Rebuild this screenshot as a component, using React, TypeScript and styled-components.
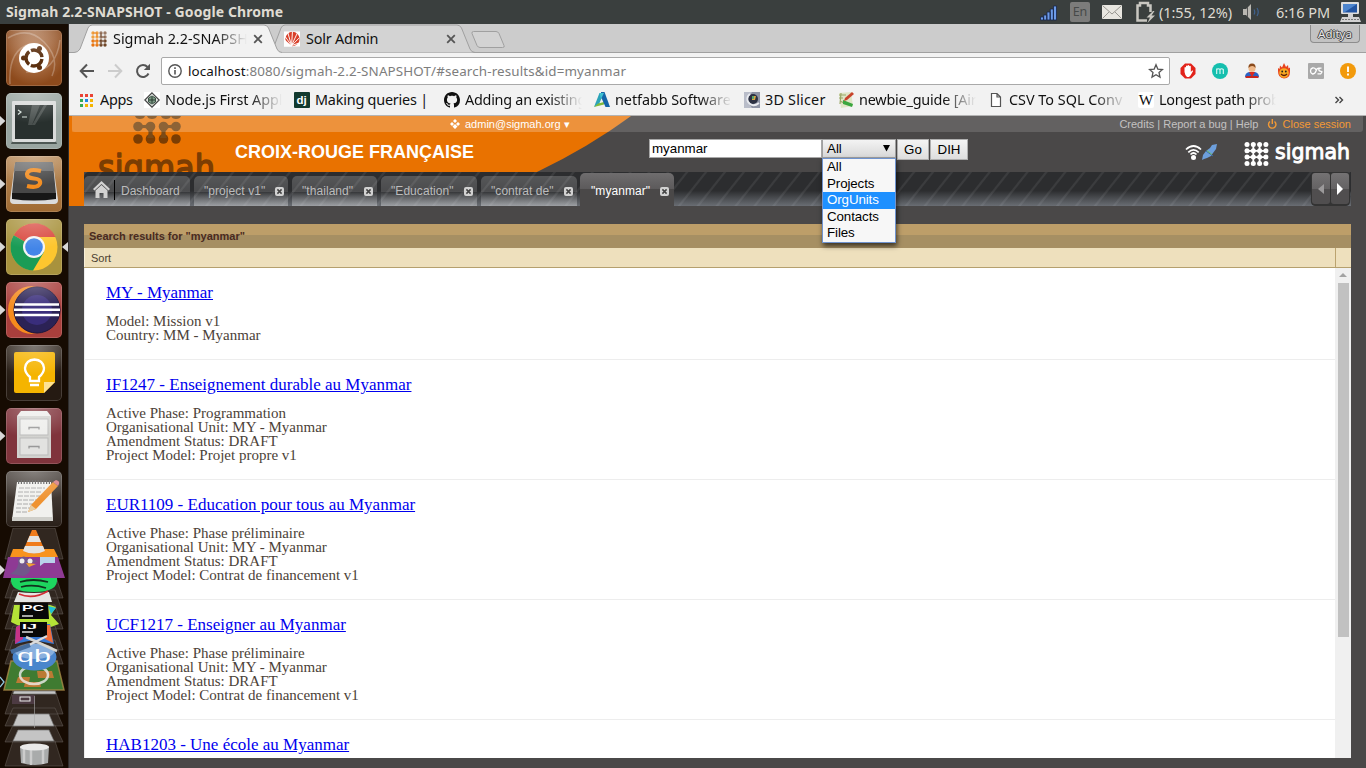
import React from 'react';
import styled, { createGlobalStyle, css } from 'styled-components';

const Global = createGlobalStyle`
  * { box-sizing: border-box; }
  body { margin: 0; overflow: hidden; background: #4a4848; }
  svg { display: block; flex: none; }
`;

const ui = '"Noto Sans", sans-serif';
const sans = '"Liberation Sans", Arial, sans-serif';
const serif = '"Liberation Serif", "Times New Roman", serif';

const Screen = styled.div`
  width: 1366px;
  height: 768px;
  display: flex;
  flex-direction: column;
  overflow: hidden;
  font-family: ${ui};
`;

/* ---------- desktop panel ---------- */

const Panel = styled.header`
  height: 24px;
  flex: none;
  display: flex;
  align-items: center;
  padding: 0 4px 0 6px;
  background: #3a3f3e;
  color: #dfdbd2;
`;

const PanelText = styled.span<{ $bold?: boolean; $width?: number; $gap?: number }>`
  font-size: ${(p) => (p.$bold ? 14 : 14.5)}px;
  letter-spacing: ${(p) => (p.$bold ? 0.1 : -0.06)}px;
  font-weight: ${(p) => (p.$bold ? 700 : 400)};
  ${(p) => p.$width && `width: ${p.$width}px;`}
  margin-left: ${(p) => p.$gap ?? 0}px;
  padding-bottom: 1px;
  white-space: pre;
  flex: none;
`;

const Tray = styled.div`
  margin-left: auto;
  display: flex;
  align-items: center;
`;

const LangBadge = styled.span`
  width: 20px;
  height: 20px;
  margin: 0 12px 0 13px;
  border-radius: 2px;
  background: #7c7c7b;
  color: #474a49;
  font-size: 12.5px;
  line-height: 19px;
  text-align: center;
`;

const Workspace = styled.div`
  flex: 1;
  display: flex;
  min-height: 0;
`;

/* ---------- launcher ---------- */

const Launcher = styled.nav`
  width: 69px;
  flex: none;
  display: flex;
  flex-direction: column;
  gap: 7px;
  padding-top: 6px;
  background: #160b02;
  border-right: 1px solid #2f2d2d;
`;

const Slot = styled.div`
  display: flex;
  align-items: center;
  height: 56px;
  flex: none;
`;

const Marker = styled.i<{ $on?: boolean; $right?: boolean }>`
  width: 6px;
  height: 10px;
  flex: none;
  background: ${(p) => (p.$on ? '#d8d8d8' : 'transparent')};
  clip-path: ${(p) => (p.$right ? 'polygon(100% 0, 0 50%, 100% 100%)' : 'polygon(0 0, 90% 50%, 0 100%)')};
`;

const Tile = styled.div<{ $bg: string }>`
  position: relative;
  width: 56px;
  height: 56px;
  flex: none;
  border-radius: 5px;
  overflow: hidden;
  background: ${(p) => p.$bg};

  &::after {
    content: '';
    position: absolute;
    inset: 0;
    border-radius: 5px;
    background: radial-gradient(ellipse 50px 30px at 50% 0, rgba(255, 255, 255, 0.3), transparent);
    box-shadow: inset 0 0 0 1px rgba(255, 255, 255, 0.16);
  }
`;

const Pile = styled.div`
  margin-top: -6px;
  flex: none;
`;

/* ---------- browser ---------- */

const Browser = styled.main`
  flex: 1;
  min-width: 0;
  display: flex;
  flex-direction: column;
`;

const TabStrip = styled.div`
  height: 29px;
  flex: none;
  display: flex;
  align-items: flex-start;
  padding-left: 5px;
  position: relative;
  background: #ccc;
  box-shadow: inset 0 -1px #a0a0a0;
`;

const BrowserTab = styled.div<{ $front?: boolean; $width: number }>`
  position: relative;
  z-index: ${(p) => (p.$front ? 2 : 1)};
  width: ${(p) => p.$width}px;
  height: 29px;
  margin-right: -15px;
  padding: 1px 20px 0 17px;
  display: flex;
  align-items: center;
  gap: 6px;
  flex: none;
`;

const TabShape = styled.svg`
  position: absolute;
  inset: 0;
  z-index: -1;
`;

const Faded = styled.span<{ $width: number; $fade?: boolean; $ls?: number }>`
  width: ${(p) => p.$width}px;
  flex: none;
  overflow: hidden;
  white-space: pre;
  color: #111;
  font-size: 14.4px;
  letter-spacing: ${(p) => p.$ls ?? 0}px;
  line-height: 20px;
  ${(p) => p.$fade && css`mask-image: linear-gradient(to right, #000 calc(100% - 32px), transparent);`}
`;

const UserButton = styled.div`
  width: 50px;
  height: 18px;
  margin: 1px 6px 0 auto;
  border: 1px solid #8d8d8d;
  border-top: 0;
  border-radius: 0 0 4px 4px;
  background: #c2c2c2;
  color: #e8e8e8;
  font-size: 11.5px;
  line-height: 18px;
  text-align: center;
  text-shadow: 1px 0 #444, -1px 0 #444, 0 1px #444, 0 -1px #444;
`;

const Toolbar = styled.div`
  height: 33px;
  flex: none;
  display: flex;
  align-items: center;
  padding: 3px 10px 0 10px;
  background: #f2f2f2;
`;

const NavIcons = styled.div`
  display: flex;
  gap: 10px;
  width: 82px;
`;

const Omnibox = styled.div`
  width: 1009px;
  height: 28px;
  border: 1px solid #a9a9a9;
  border-radius: 2px;
  background: #fff;
  display: flex;
  align-items: center;
  padding: 0 5px 0 6px;
  gap: 6px;
`;

const Url = styled.span`
  flex: 1;
  font-size: 13.4px;
  letter-spacing: 0.13px;
  color: #7d7d7d;
  b { font-weight: 400; color: #111; }
`;

const Extensions = styled.div`
  display: flex;
  gap: 16px;
  margin-left: 10px;
`;

const Bookmarks = styled.div`
  height: 30px;
  flex: none;
  display: flex;
  align-items: center;
  padding: 0 0 2px 10px;
  background: #f2f2f2;
  box-shadow: inset 0 -1px #b4b4b4;
`;

const Bookmark = styled.div<{ $width: number }>`
  width: ${(p) => p.$width}px;
  flex: none;
  display: flex;
  align-items: center;
  gap: 5px;
`;

/* ---------- web application ---------- */

const WebApp = styled.section`
  flex: 1;
  min-height: 0;
  position: relative;
  display: flex;
  flex-direction: column;
  background: #4a4848;
  font-family: ${sans};
  isolation: isolate;
`;

const Banner = styled.svg`
  position: absolute;
  top: 0;
  left: 0;
  z-index: -1;
`;

const UserBand = styled.div`
  height: 16px;
  flex: none;
  display: flex;
  align-items: center;
  margin: 0 3px;
  padding: 0 12px 0 378px;
  border-radius: 0 0 3px 3px;
  background: rgba(255, 255, 255, 0.14);
  font-size: 11px;
  color: #fff;
`;

const UserMail = styled.span`
  margin-left: 5px;
  white-space: pre;
`;

const BandLinks = styled.div`
  margin-left: auto;
  display: flex;
  align-items: center;
  color: #c3c2c2;
  white-space: pre;
  em { font-style: normal; color: #f39a35; margin-left: 5px; }
`;

const BrandRow = styled.div`
  height: 40px;
  flex: none;
  display: flex;
  align-items: flex-start;
  padding: 7px 15px 0 166px;
`;

const OrgName = styled.h1`
  margin: 3px 0 0;
  width: 414px;
  font-size: 18px;
  line-height: 20px;
  color: #fff;
`;

const SearchForm = styled.div`
  display: flex;
  font-size: 13.33px;
  color: #000;
  position: relative;
`;

const Field = styled.div`
  width: 173px;
  height: 19px;
  padding: 0 2px;
  border: 1px solid #a8a8a8;
  background: #fff;
  line-height: 17px;
`;

const Select = styled.div`
  width: 74px;
  height: 19px;
  padding: 0 5px 0 4px;
  border: 1px solid #a0a0a0;
  background: linear-gradient(#f3f3f3, #d9d9d9);
  display: flex;
  align-items: center;
  justify-content: space-between;
`;

const Options = styled.ul`
  position: absolute;
  z-index: 5;
  top: 19px;
  left: 173px;
  width: 74px;
  height: 85px;
  margin: 0;
  padding: 0;
  list-style: none;
  border: 1px solid #6f93cf;
  background: #f7f7f7;
  box-shadow: 1px 3px 5px rgba(0, 0, 0, 0.65);
`;

const Option = styled.li<{ $on?: boolean }>`
  height: 16.6px;
  line-height: 15px;
  padding-left: 4px;
  letter-spacing: -0.1px;
  color: ${(p) => (p.$on ? '#fff' : '#000')};
  background: ${(p) => (p.$on ? '#1e90ff' : 'transparent')};
`;

const PushButton = styled.div<{ $width: number }>`
  width: ${(p) => p.$width}px;
  height: 21px;
  margin: 0 0 0 1px;
  border: 1px solid #b0b0b0;
  background: linear-gradient(#f4f4f4, #dedede);
  line-height: 20px;
  text-align: center;
`;

const BrandLogo = styled.div`
  margin-left: auto;
  display: flex;
  gap: 24px;
`;

const TabBar = styled.div`
  height: 34px;
  flex: none;
  margin: 0 15px;
  display: flex;
  align-items: flex-end;
  gap: 4px;
  border-radius: 5px 0 0 0;
  overflow: hidden;
  background:
    linear-gradient(rgba(255, 255, 255, 0) 55%, rgba(190, 198, 210, 0.42)),
    repeating-linear-gradient(128.5deg, #2c2d2f 0 11.6px, #3b3c3e 12.6px 13.8px, #2c2d2f 14.8px);
`;

const AppTab = styled.div<{ $width: number; $active?: boolean }>`
  width: ${(p) => p.$width}px;
  height: ${(p) => (p.$active ? 33 : 30)}px;
  margin-left: ${(p) => (p.$active ? -1 : 0)}px;
  padding: ${(p) => (p.$active ? '3px 4px 0 11px' : '0 3px 0 10px')};
  flex: none;
  display: flex;
  align-items: center;
  justify-content: space-between;
  border-radius: 5px 5px 0 0;
  font-size: 12px;
  letter-spacing: 0.06px;
  color: ${(p) => (p.$active ? '#fff' : '#bcbcbd')};
  background: ${(p) =>
    p.$active
      ? 'linear-gradient(#6f6d6e, #5c5a5b 16px, #4a4848 16px)'
      : 'linear-gradient(rgba(255,255,255,.2), rgba(255,255,255,.14) 16px, rgba(255,255,255,.02) 16px, rgba(255,255,255,.34))'};
`;

const HomeTab = styled(AppTab)`
  padding: 0 0 3px 9px;
  justify-content: flex-start;
  letter-spacing: 0;
  span { padding-top: 3px; }
`;

const HomeRule = styled.i`
  width: 1px;
  height: 20px;
  margin: 0 6px 0 4px;
  background: #000;
`;

const Pager = styled.div`
  margin-left: auto;
  margin-right: 1px;
  display: flex;
  gap: 1px;
  height: 34px;
  padding-bottom: 1px;
  background: #333;
  border: 1px solid #333;
  border-radius: 4px;
`;

const PagerButton = styled.div`
  width: 18px;
  display: flex;
  align-items: center;
  justify-content: center;
  border-radius: 3px;
  background: linear-gradient(#747273, #646263 16px, #504e4f 16px);
`;

const Results = styled.section`
  flex: 1;
  min-height: 0;
  margin: 18px 15px 10px;
  display: flex;
  flex-direction: column;
`;

const ResultsTitle = styled.h2`
  height: 24px;
  flex: none;
  margin: 0;
  padding-left: 5px;
  font-size: 11px;
  line-height: 24px;
  color: #4a2a20;
  background: linear-gradient(#bd9e69 11px, #a68f63 11px);
`;

const SortRow = styled.div`
  height: 20px;
  flex: none;
  display: flex;
  border-bottom: 1px solid #b5a06e;
  background: #eee0bd;
  font-size: 11px;
  line-height: 20px;
  color: #4b3f30;
  span { width: 1252px; padding-left: 7px; border-right: 1px solid #bba36f; box-shadow: inset 1px 0 #f8efd8; }
`;

const ListArea = styled.div`
  flex: 1;
  min-height: 0;
  display: flex;
  background: #fff;
`;

const List = styled.div`
  width: 1251px;
  overflow: hidden;
  font-family: ${serif};
  border-left: 1px solid #ededed;
`;

const Item = styled.article`
  padding: 15px 0 17px 21px;
  border-bottom: 1px solid #ededed;
`;

const ItemLink = styled.a`
  display: block;
  height: 20px;
  margin-bottom: 11px;
  font-size: 17px;
  line-height: 20px;
  color: #0000ee;
  text-decoration: underline;
  white-space: pre;
`;

const Detail = styled.div`
  font-size: 15px;
  line-height: 14px;
  color: #4c4238;
`;

const Scrollbar = styled.div`
  width: 16px;
  background: #f0f0f0;
  display: flex;
  flex-direction: column;
  align-items: center;
  padding-top: 5px;
`;

const Thumb = styled.div`
  width: 11px;
  height: 354px;
  margin: 5px 0 0 1px;
  background: #c1c1c1;
`;

/* ---------- drawings ---------- */

const Close = () => (
  <svg width="10" height="10" viewBox="0 0 10 10">
    <path d="M1.200 1.200l7.600 7.600M8.800 1.200L1.200 8.800" stroke="#555" strokeWidth="1.8" />
  </svg>
);

const TabClose = () => (
  <svg width="11" height="11" viewBox="0 0 11 11">
    <rect x="1" y="1" width="9" height="9" rx="2" fill="#d2d2d2" />
    <path d="M3.4 3.4l4.2 4.2M7.6 3.4L3.4 7.6" stroke="#444" strokeWidth="1.5" />
  </svg>
);

const dotGrid = [0, 1, 2, 3];

const SigmahMini = () => (
  <svg width="16" height="16" viewBox="0 0 16 16">
    {dotGrid.map((r) =>
      dotGrid.map((c) => (
        <circle key={`${r}${c}`} cx={2 + c * 4} cy={2 + r * 4} r="1.7"
          fill={r < 2 ? (c < 2 ? '#f0a040' : '#9b7a66') : c < 2 ? '#e87410' : '#6e4526'} />
      ))
    )}
    <path d="M2 2h4M6 2v4M2 10h4M6 10v4" stroke="#ea8a2a" strokeWidth="1.2" />
    <path d="M10 2v4M10 6h4M10 10v4M10 10h4" stroke="#82604a" strokeWidth="1.2" />
  </svg>
);

const Solr = () => (
  <svg width="16" height="16" viewBox="0 0 17 16">
    <rect width="17" height="16" fill="#fff" />
    <circle cx="9" cy="8" r="7.6" fill="#d9402a" />
    <path d="M8 15L1 5M8 15L4 1M8 15L9 0M8 15l6-13M8 15l8-8M8 15l9-3" stroke="#fff" strokeWidth="1" />
    <path d="M0 8l9 8H0z" fill="#fff" />
  </svg>
);

const Apps = () => {
  const colors = ['#ea4335', '#ea4335', '#ea4335', '#34a853', '#1e88e5', '#f4b400', '#34a853', '#f4b400', '#f4b400'];
  return (
    <svg width="16" height="15" viewBox="0 0 16 15">
      {colors.map((c, i) => (
        <rect key={i} x={1 + (i % 3) * 5} y={1 + Math.floor(i / 3) * 5} width="3" height="3" fill={c} />
      ))}
    </svg>
  );
};

const NodeIcon = () => (
  <svg width="16" height="16" viewBox="0 0 16 16">
    <rect width="16" height="16" fill="#fff" />
    <path d="M8 .8L15.2 8 8 15.2.8 8z" fill="#e4e8e4" stroke="#444" strokeWidth="1.2" />
    <path d="M8 4l3.5 2v4L8 12l-3.500-2V6z" fill="#7d9c86" stroke="#3d5246" />
    <path d="M5 8h6M8 5v6" stroke="#2b3a31" />
  </svg>
);

const DjangoIcon = () => (
  <svg width="16" height="16" viewBox="0 0 16 16">
    <rect width="16" height="16" rx="1" fill="#123a2e" />
    <text x="2.6" y="11.500" fontFamily="Liberation Sans" fontWeight="700" fontSize="11.500" fill="#fff">dj</text>
  </svg>
);

const GitHub = () => (
  <svg width="16" height="16" viewBox="0 0 16 16">
    <path fill="#111" d="M8 0C3.580 0 0 3.580 0 8c0 3.540 2.290 6.530 5.470 7.590.4.07.550-.170.550-.380 0-.190-.010-.820-.010-1.490-2.010.370-2.530-.490-2.690-.940-.090-.230-.480-.940-.820-1.130-.280-.150-.680-.520-.010-.530.630-.010 1.080.580 1.230.820.720 1.210 1.870.870 2.330.660.070-.520.280-.870.510-1.070-1.780-.2-3.640-.890-3.640-3.950 0-.870.310-1.590.820-2.150-.080-.2-.360-1.020.080-2.120 0 0 .670-.210 2.200.820.640-.180 1.320-.270 2-.270s1.360.090 2 .270c1.530-1.040 2.200-.820 2.200-.820.440 1.100.160 1.920.080 2.120.510.560.820 1.270.820 2.150 0 3.070-1.870 3.750-3.650 3.950.290.250.540.730.540 1.480 0 1.070-.010 1.930-.010 2.200 0 .210.150.460.550.380A8.010 8.010 0 0016 8c0-4.420-3.580-8-8-8z" />
  </svg>
);

const Autodesk = () => (
  <svg width="16" height="16" viewBox="0 0 16 16">
    <path d="M0 15L5.500 1H10L5 12z" fill="#2ba3b8" />
    <path d="M0 15l4-3.500 6-1.500v2.500z" fill="#7fba3c" />
    <path d="M7 0h3.500L16 15h-4.500L7 5z" fill="#1565a8" />
    <path d="M5.500 1H10l-3 6z" fill="#3fc0d0" />
  </svg>
);

const Slicer = () => (
  <svg width="16" height="16" viewBox="0 0 16 16">
    <rect width="16" height="16" fill="#8d93a4" />
    <path d="M0 0h8L3 9l5 7H0z" fill="#b9bdc9" />
    <circle cx="9" cy="7" r="5" fill="#2c3142" />
    <path d="M6 2a6 6 0 000 10q4 3 9-1" stroke="#e9ebf0" strokeWidth="1.800" fill="none" />
    <path d="M8 4h4l-1 4H8z" fill="#d9a441" />
    <path d="M8 4h2v3H8z" fill="#5ba36c" />
  </svg>
);

const Newbie = () => (
  <svg width="16" height="16" viewBox="0 0 16 16">
    <path d="M1 1l12-1 2 14-12 2z" fill="#dfe5c6" />
    <path d="M1 3h7M1 6h4M2 9l4 2M3 1l-1 11" stroke="#9aa766" strokeWidth="1.200" />
    <path d="M5 8l10 4-1 3-9-3z" fill="#3aa63f" />
    <path d="M14 0l2 2-7 6-3 1 1-3z" fill="#c8432b" />
  </svg>
);

const PageIcon = () => (
  <svg width="16" height="16" viewBox="0 0 16 16">
    <path d="M3.500 1.500h5.500l3.500 3.500v9.500h-9zM9 1.500V5h3.500" fill="#fff" stroke="#555" strokeWidth="1.200" />
  </svg>
);

const Wiki = () => (
  <svg width="16" height="16" viewBox="0 0 16 16">
    <rect width="16" height="16" rx="2" fill="#fff" />
    <text x="0.800" y="12.800" fontFamily="Liberation Serif" fontSize="14" textLength="14.500" lengthAdjust="spacingAndGlyphs" fill="#111">W</text>
  </svg>
);

const ExtBlock = () => (
  <svg width="16" height="16" viewBox="0 0 16 16">
    <path d="M5 .5h6L15.500 5v6L11 15.500H5L.5 11V5z" fill="#e2231a" />
    <path d="M4.500 9V4.500q.8-1 1.500 0V3q.8-1 1.600 0V2.500q.8-1 1.600 0V3.300q.9-1 1.600 0V9l1.300-1.500q1.200-.3.900.8L10.500 12.500 9 14H7Q5 12.500 4.500 9z" fill="#fff" />
  </svg>
);

const ExtMonkey = () => (
  <svg width="16" height="16" viewBox="0 0 16 16">
    <circle cx="8" cy="8" r="8" fill="#15bfae" />
    <path d="M4.700 11V5.500M4.700 6.500q1.600-1.500 3.300 0V11M8 6.500q1.600-1.500 3.300 0V11" stroke="#dffaf6" strokeWidth="1.100" fill="none" />
  </svg>
);

const ExtHero = () => (
  <svg width="16" height="16" viewBox="0 0 16 16">
    <path d="M1 14q0-4 4-5h6q4 1 4 5z" fill="#2b62c4" />
    <path d="M5 9l3 5 3-5z" fill="#d92b20" />
    <path d="M1 14l2-1h10l2 1-1 1H2z" fill="#c9251c" />
    <circle cx="8" cy="5.500" r="3.500" fill="#efb98a" />
    <path d="M4.500 5Q4 .5 8 .5T11.500 5Q10 2.800 8 3T4.500 5z" fill="#8a4a1c" />
  </svg>
);

const ExtFlame = () => (
  <svg width="16" height="16" viewBox="0 0 16 16">
    <path d="M2 8V5l1.500 1L4 2.500l2 2L8 0l2 4 2-2 .5 3.500L14 4.500V9q0 6-6 6.500Q2 15 2 8z" fill="#e8431c" />
    <circle cx="8" cy="10" r="4.800" fill="#f7a823" />
    <circle cx="6.200" cy="8.500" r=".9" fill="#222" />
    <circle cx="9.800" cy="8.500" r=".9" fill="#222" />
    <path d="M5 11q3 3 6 0" stroke="#5b1c0a" fill="none" strokeWidth="1.200" />
  </svg>
);

const ExtLast = () => (
  <svg width="16" height="16" viewBox="0 0 16 16">
    <rect width="16" height="16" rx="1" fill="#a9a9a9" />
    <path d="M8 6.500Q6.500 4.500 4.500 5T2.500 8t2 3Q7 11 8 8T11 5.200h2.500M13.500 5.200Q10.800 4.800 10.800 6.500T13 8.300 12.500 10.900H9.500" stroke="#fff" strokeWidth="1.300" fill="none" />
  </svg>
);

const ExtWarn = () => (
  <svg width="16" height="16" viewBox="0 0 16 16">
    <circle cx="8" cy="8" r="8" fill="#f29a0c" />
    <path d="M8 3.500v5.500M8 10.600v2" stroke="#fff" strokeWidth="1.900" />
  </svg>
);

const HeaderBanner = () => (
  <Banner width="1297" height="100" viewBox="0 0 1297 100">
    <defs>
      <clipPath id="brand"><rect width="400" height="56" /></clipPath>
    </defs>
    <path d="M0 0H562Q520 31 468 56V56H15V90H0z" fill="#e97200" />
    <path d="M3 0H562Q551 8.500 539 16H3z" fill="#fff" fillOpacity=".11" />
    <g fill="#7b4a16">
      <path d="M66 0h10q-1 3-5 3t-5-3M78 0h10q-1 3-5 3t-5-3M92 0h10q-1 3-5 3t-5-3M102 0h10q-1 3-5 3t-5-3" />
      {[69, 81.500, 94.500, 107].map((x) => (
        <g key={x}>
          <circle cx={x} cy="10.500" r="4.800" />
          <circle cx={x} cy="23" r="4.800" fill="#7b3d03" />
        </g>
      ))}
      <path d="M69 7.500q6 3 12 0v6q-6-3-12 0zM94.500 7.500q6 3 12 0v6q-6-3-12 0zM78 12q3 5 0 10h7q-3-5 0-10zM91 12q3 5 0 10h7q-3-5 0-10z" />
    </g>
    <g clipPath="url(#brand)">
      <text x="29" y="63.500" fontFamily="DejaVu Sans" fontSize="35" textLength="117" lengthAdjust="spacingAndGlyphs" fill="#7b3d03" stroke="#7b3d03" strokeWidth="1.600" strokeLinejoin="round">sigmah</text>
    </g>
  </Banner>
);

const LogoMark = () => (
  <svg width="108" height="34" viewBox="0 0 108 34">
    <g fill="#fff">
      {dotGrid.map((r) => dotGrid.map((c) => <circle key={`${r}${c}`} cx={4 + c * 6.300} cy={5.500 + r * 6.300} r="2.500" />))}
    </g>
    <path d="M4 11.800h19M4 18.100h19M10.300 5.500v19M16.600 5.500v19" stroke="#fff" strokeWidth="1.800" fill="none" />
    <text x="32" y="20.300" fontFamily="DejaVu Sans" fontSize="22" textLength="75" lengthAdjust="spacingAndGlyphs" fill="#fff" stroke="#fff" strokeWidth="1" strokeLinejoin="round">sigmah</text>
  </svg>
);

const Wifi = () => (
  <svg width="34" height="24" viewBox="0 -4 34 24">
    <g stroke="#fff" fill="none" strokeWidth="1.700">
      <path d="M1 6.500q7.500-7 15 0M3.300 9.300q5.200-5 10.400 0M5.500 11.500q3-3 6 0" />
    </g>
    <circle cx="8.500" cy="14.500" r="2.500" fill="#fff" />
    <path d="M17 17l1-5 3-4 4-3 2-3 5-1-1 5-3 4-2 3-4 2-3 1z" fill="#6d9fdc" />
    <path d="M21 8l7 5" stroke="#3c6fae" strokeWidth="1" />
    <path d="M22 7.500l5 4" stroke="#6fc067" strokeWidth="1" />
  </svg>
);

const launcherItems: { bg: string; on?: boolean; focus?: boolean; art: React.ReactNode }[] = [
  {
    bg: 'radial-gradient(circle at 50% 40%, #c08a64, #8d4a1c 75%)',
    art: (
      <>
        <path d="M2 8q20-12 36 4t8 34M54 10q-4 34-34 32M4 54Q2 20 24 14" stroke="#fff" strokeOpacity=".25" strokeWidth="1.500" fill="none" />
        <circle cx="28" cy="28" r="15" fill="#fff" />
        <circle cx="28" cy="28" r="8" fill="none" stroke="#5c3010" strokeWidth="3.400" strokeDasharray="14.700 2" strokeDashoffset="-1" />
        <circle cx="17.500" cy="28" r="2.500" fill="#5c3010" />
        <circle cx="33.500" cy="18.500" r="2.500" fill="#5c3010" />
        <circle cx="33.500" cy="37.500" r="2.500" fill="#5c3010" />
      </>
    ),
  },
  {
    bg: '#99a5a0', on: true,
    art: (
      <>
        <path d="M5 51h46l-2-5H7z" fill="#4d5753" />
        <rect x="6" y="8" width="44" height="41" rx="1" fill="#d9dbda" />
        <rect x="9" y="12" width="38" height="34" fill="#28302e" />
        <path d="M26 12h8l-8 20h-4zM38 12h3L29 32h-3z" fill="#fff" fillOpacity=".16" />
        <path d="M12 17l3 2-3 2.500M16 24h5" stroke="#d8e4de" strokeWidth="1.200" fill="none" />
      </>
    ),
  },
  {
    bg: 'linear-gradient(#b98b5a, #a06b33)', on: true,
    art: (
      <>
        <path d="M9 7h38l5 37q0 4-4 4H8q-4 0-4-4z" fill="#dcdcdc" />
        <path d="M11 6h34q2 0 2 2l3 30q0 5-3 5H9q-3 0-3-5L9 8q0-2 2-2z" fill="#474747" />
        <path d="M11 6h34q2 0 2 2l1 7H8l1-7q0-2 2-2z" fill="#6d6d6d" />
        <path d="M6 37h44v6q-22 3-44 0z" fill="#171717" />
        <path d="M35 15q-13-3-14 3 0 4 7 4.500t6 5q-2 5-13 2.500" stroke="#f28c1f" strokeWidth="4.200" fill="none" />
      </>
    ),
  },
  {
    bg: '#a8923d', on: true, focus: true,
    art: (
      <>
        <circle cx="28" cy="28" r="23.500" fill="#fdc62f" />
        <path d="M28 28L7.700 16.200A23.500 23.500 0 0149.500 18H28z" fill="#d9483f" />
        <path d="M28 28L7.700 16.200A23.500 23.500 0 0027 51.500L38 33z" fill="#1a9c56" />
        <circle cx="28" cy="28" r="11" fill="#f4f4f4" />
        <circle cx="28" cy="28" r="8.800" fill="#4285e8" />
      </>
    ),
  },
  {
    bg: '#a93f3c', on: true,
    art: (
      <>
        <circle cx="26" cy="28" r="24" fill="#f58b1d" />
        <circle cx="32" cy="28" r="24" fill="#a93f3c" />
        <circle cx="31" cy="28" r="23" fill="#2b2255" stroke="#1c183d" />
        <circle cx="31" cy="28" r="15" fill="#45379a" fillOpacity=".55" />
        <path d="M9 22.500h44M8 27.700h46M9 33h44" stroke="#fff" strokeWidth="2.500" />
      </>
    ),
  },
  {
    bg: 'radial-gradient(circle at 50% 10%, #4b433c, #251a12 70%)',
    art: (
      <>
        <path d="M10 7h37q2 0 2 2v28L38 48H10q-2 0-2-2V9q0-2 2-2z" fill="#f5b400" />
        <path d="M49 37L38 48V37z" fill="#fde293" />
        <path d="M24 36v-4q-5-4-5-9 1-8 9.500-8.500Q37 15 38 23q0 5-5 9v4zM24 40h9" stroke="#fff" strokeWidth="2.300" fill="none" />
      </>
    ),
  },
  {
    bg: '#80343c', on: true,
    art: (
      <>
        <path d="M15 3h26l4 5v42H11V8z" fill="#ededeb" />
        <path d="M11 8h34v42H11z" fill="#d2d2cf" />
        <rect x="14" y="11" width="28" height="16" fill="#eeeeec" stroke="#bbb" />
        <rect x="14" y="30" width="28" height="17" fill="#e2e2e0" stroke="#bbb" />
        <path d="M23 21.500v-2h10v2M23 40.500v-2h10v2" stroke="#999" strokeWidth="1.300" fill="none" />
      </>
    ),
  },
  {
    bg: 'linear-gradient(#534c47, #2a2019)',
    art: (
      <>
        <path d="M11 11h34l2 38H6z" fill="#f1f1ee" />
        <path d="M12 11h33" stroke="#555" strokeWidth="4" strokeDasharray="1.200 1.600" />
        <path d="M13 17h26M12 21h24M12 25h22M11 29h20M11 33h16M10 37h14M10 41h12" stroke="#aaa" strokeDasharray="5 1" />
        <path d="M6 46h41v4H6z" fill="#cfcfca" />
        <path d="M22 41l3-7L47 11l5 4-22 23z" fill="#ef9331" />
        <path d="M25 34l5 4-8 3z" fill="#e8cfa5" />
        <path d="M47 11l3-2q4 1 3 4l-1 2z" fill="#d87f86" />
      </>
    ),
  },
];

const LauncherPile = () => (
  <svg width="68" height="240" viewBox="0 0 68 240">
    <g fill="#3b322b" fillOpacity=".75" stroke="#6a625b" strokeOpacity=".5">
      <path d="M13 0h42l8 31H5zM13 46h42l8 24H5zM13 62h42l8 24H5zM13 77h42l8 24H5zM13 98h42l8 24H5zM13 112h42l8 24H5zM13 162h42l8 24H5zM13 180h42l8 18H5zM13 197h42l8 17H5zM13 213h42l8 25H5z" />
    </g>
    <path d="M0 37l5 5-5 5z" fill="#ddd" />
    <path d="M0 149l4 5-4 5" fill="none" stroke="#8fc6dc" strokeWidth="1.300" />
    <path d="M13 21h41l4 8H10z" fill="#f7931e" />
    <path d="M8 29h50l7 21H3z" fill="#8e3a94" />
    <path d="M32 2h4l9 21q-11 6-22 0z" fill="#f07c1c" />
    <path d="M29.500 8h9l2.500 6H27zM25 18h18l2 5q-11 5-22 0z" fill="#e4e4e2" />
    <path d="M10 46q10-5 8-15 6-5 11 0l9 2-8 3q2 9-6 12z" fill="#73568b" />
    <circle cx="22" cy="33" r="2.500" fill="#eee" /><circle cx="30" cy="33" r="2.500" fill="#eee" />
    <path d="M26 35l10 1-7 3z" fill="#f0a030" />
    <path d="M40 29h15v6H44l-4 3z" fill="#b9d2ea" />
    <path d="M11 50h46q2 14-23 14T11 50z" fill="#1ed65f" />
    <path d="M20 54q13-4 28 0M21 59q12-3 25 1" stroke="#11331d" strokeWidth="1.800" fill="none" />
    <path d="M18 64q16 2 31 0l3 10H14z" fill="#e5e5e3" />
    <path d="M19 66q14 6 29-3" stroke="#d22e35" strokeWidth="1.600" fill="none" />
    <path d="M14 77h36l6 2-5 8 8 9-22 8-20-7-6-3z" fill="#b5e337" />
    <path d="M48 78l8 2-5 6z" fill="#20bfd6" />
    <path d="M20 75h28l1 16H19z" fill="#080808" />
    <text x="22" y="83" fontFamily="Liberation Sans" fontWeight="700" fontSize="9" textLength="22" lengthAdjust="spacingAndGlyphs" fill="#fff">PC</text>
    <path d="M22 88h11" stroke="#fff" strokeWidth="1.300" />
    <path d="M16 99l6-3h28l4 20-21-4-18 4z" fill="#3677d1" />
    <path d="M16 99l6-3 1 15-8 5z" fill="#c83386" /><path d="M44 97l6 0 3 18-8-4z" fill="#ef6c3a" />
    <path d="M20 94h27v15H20z" fill="#080808" />
    <text x="22" y="101" fontFamily="Liberation Sans" fontWeight="700" fontSize="8" textLength="15" lengthAdjust="spacingAndGlyphs" fill="#fff">IJ</text>
    <path d="M22 104h11" stroke="#fff" strokeWidth="1.300" />
    <path d="M11 133h46l7 29H4z" fill="#3f7b31" stroke="#a98a46" strokeOpacity=".8" strokeWidth="1.500" />
    <path d="M37 143h15l2 7H38zM18 149h12l-1 6H16zM25 154h15l1 5H24z" fill="#bb7a34" />
    <ellipse cx="34" cy="147" rx="14" ry="9" fill="none" stroke="#eee" strokeOpacity=".8" strokeWidth="2.500" />
    <ellipse cx="34.500" cy="129" rx="22" ry="13.500" fill="#4a86cc" />
    <ellipse cx="34.500" cy="123" rx="20" ry="8" fill="#fff" fillOpacity=".35" />
    <text x="17" y="134" fontFamily="Liberation Sans" fontSize="19" textLength="34" lengthAdjust="spacingAndGlyphs" fill="#fff">qb</text>
    <path d="M26 109l31 14" stroke="#d5d5d0" strokeWidth="2.500" />
    <path d="M47 108L29 117" stroke="#ddd" strokeWidth="2" /><path d="M30 117l-19 7" stroke="#456d9d" strokeWidth="4.500" />
    <g fill="#c4c4c4" stroke="#777" strokeWidth=".7">
      <path d="M14 163h41l1 3H13zM18 186h31l5 12H13zM18 202h31l5 11H13z" />
    </g>
    <rect x="12" y="167" width="23" height="9" fill="#4c3a42" />
    <rect x="20" y="169" width="10" height="4" fill="none" stroke="#eee" />
    <path d="M34.500 168v32" stroke="#aaa" strokeOpacity=".6" />
    <path d="M20 219h29l-1 16q-13 4-27 0z" fill="#a9abab" />
    <path d="M24 220v15M31 220v17M43 220v16" stroke="#ccc" strokeWidth="2.500" />
    <ellipse cx="34.500" cy="219" rx="14.500" ry="3.500" fill="#e9e9e9" />
  </svg>
);

/* ---------- data ---------- */

const bookmarks: { icon: React.ReactNode; label: string; width: number; text: number; fade?: boolean; ls?: number }[] = [
  { icon: <Apps />, label: 'Apps', width: 65, text: 40, ls: -0.3 },
  { icon: <NodeIcon />, label: 'Node.js First Appl', width: 150, text: 117, fade: true, ls: -0.05 },
  { icon: <DjangoIcon />, label: 'Making queries |', width: 150, text: 118, ls: -0.2 },
  { icon: <GitHub />, label: 'Adding an existing', width: 150, text: 117, fade: true, ls: -0.25 },
  { icon: <Autodesk />, label: 'netfabb Software', width: 150, text: 117, fade: true, ls: -0.05 },
  { icon: <Slicer />, label: '3D Slicer', width: 94, text: 70, ls: 0.2 },
  { icon: <Newbie />, label: 'newbie_guide [Air', width: 150, text: 117, fade: true, ls: -0.2 },
  { icon: <PageIcon />, label: 'CSV To SQL Conv', width: 150, text: 117, fade: true },
  { icon: <Wiki />, label: 'Longest path prob', width: 150, text: 117, fade: true, ls: -0.25 },
];

const openTabs = [
  { label: '"project v1"', width: 94 },
  { label: '"thailand"', width: 85 },
  { label: '"Education"', width: 96 },
  { label: '"contrat de"', width: 96 },
  { label: '"myanmar"', width: 94, active: true },
];

const results = [
  { title: 'MY - Myanmar', lines: ['Model: Mission v1', 'Country: MM - Myanmar'] },
  {
    title: 'IF1247 - Enseignement durable au Myanmar',
    lines: ['Active Phase: Programmation', 'Organisational Unit: MY - Myanmar', 'Amendment Status: DRAFT', 'Project Model: Projet propre v1'],
  },
  {
    title: 'EUR1109 - Education pour tous au Myanmar',
    lines: ['Active Phase: Phase préliminaire', 'Organisational Unit: MY - Myanmar', 'Amendment Status: DRAFT', 'Project Model: Contrat de financement v1'],
  },
  {
    title: 'UCF1217 - Enseigner au Myanmar',
    lines: ['Active Phase: Phase préliminaire', 'Organisational Unit: MY - Myanmar', 'Amendment Status: DRAFT', 'Project Model: Contrat de financement v1'],
  },
  { title: 'HAB1203 - Une école au Myanmar', lines: [] },
];

const DesktopPanel = () => (
  <Panel>
    <PanelText $bold>Sigmah 2.2-SNAPSHOT - Google Chrome</PanelText>
    <Tray>
      <svg width="17" height="18" viewBox="0 0 17 18">
        <path d="M.5 14h3v3h-3zM3.700 12h3v5h-3zM7 9h3v8H7zM10.300 6h3v11h-3zM13.500 3h3v14h-3z" fill="#6d9be8" stroke="#16264c" strokeWidth=".8" />
      </svg>
      <LangBadge>En</LangBadge>
      <svg width="20" height="14" viewBox="0 0 20 14">
        <rect width="20" height="14" rx="1" fill="#e8e6e0" />
        <path d="M1 1l9 8 9-8M1 13l6-6M19 13l-6-6" stroke="#989690" fill="none" />
      </svg>
      <svg width="34" height="22" viewBox="0 0 34 22">
        <path d="M25 19.500H15.500V4.500H18V2h8v2.500h2.500V11" stroke="#c9c7c1" strokeWidth="2.500" fill="none" />
        <path d="M31 10l-6.500 6.500h3.500L25.500 22l7.500-7.500h-3.500l3-4.500z" fill="#c9c7c1" />
      </svg>
      <PanelText $gap={3} $width={83}>(1:55, 12%)</PanelText>
      <svg width="18" height="18" viewBox="0 0 18 18">
        <path d="M1 6h3l5-5v16l-5-5H1z" fill="#b9b7b1" />
        <path d="M5.500 4v10" stroke="#555" />
        <path d="M12 6.500q1.500 2.500 0 5M15 5q2.500 4 0 8" stroke="#3f628f" strokeWidth="1.200" fill="none" />
      </svg>
      <PanelText $gap={16} $width={64}>6:16 PM</PanelText>
      <svg width="22" height="22" viewBox="0 0 22 22">
        <rect x="1" y="1" width="18" height="12" rx="1" fill="#dedede" />
        <rect x="3" y="3" width="14" height="8.500" fill="#2355a2" />
        <path d="M3 3h14L5 11H3z" fill="#4e86cf" />
        <path d="M8 13h5v3H8zM2 16h17l2 5H0z" fill="#d2d2d2" />
        <path d="M2 18.500h17" stroke="#777" strokeDasharray="2 1" />
      </svg>
    </Tray>
  </Panel>
);

const Chrome = () => (
  <>
    <TabStrip>
      <BrowserTab $front $width={208}>
        <TabShape width="208" height="29" viewBox="0 0 208 29">
          <path d="M0 28.500Q4 28.500 6 25L14 4Q15.500 1 18 1H190Q193 1 194.500 4L203 25Q204.500 28.500 208 28.500V29H0z" fill="#f2f2f2" />
          <path d="M0 28.500Q4 28.500 6 25L14 4Q15.500 1 18 1H190Q193 1 194.500 4L203 25Q204.500 28.500 208 28.500" fill="none" stroke="#a0a0a0" />
        </TabShape>
        <SigmahMini />
        <Faded $width={134} $fade>Sigmah 2.2-SNAPSH</Faded>
        <Close />
      </BrowserTab>
      <BrowserTab $width={208}>
        <TabShape width="208" height="29" viewBox="0 0 208 29">
          <path d="M0 28.500Q4 28.500 6 25L14 4Q15.500 1 18 1H190Q193 1 194.500 4L203 25Q204.500 28.500 208 28.500" fill="#d3d3d3" stroke="#a0a0a0" />
        </TabShape>
        <Solr />
        <Faded $width={134} $ls={-0.2}>Solr Admin</Faded>
        <Close />
      </BrowserTab>
      <svg width="50" height="27" viewBox="0 0 50 27">
        <path d="M13.500 7.500H36q2 0 3 2l5 12q1 2-1.500 2H20q-2 0-3-2l-5-12q-.5-2 1.500-2z" fill="#d3d3d3" stroke="#a0a0a0" />
      </svg>
      <UserButton>Aditya</UserButton>
    </TabStrip>
    <Toolbar>
      <NavIcons>
        <svg width="18" height="16" viewBox="0 0 18 16"><path d="M15 8H2M8 1.500L1.700 8 8 14.500" stroke="#555" strokeWidth="2" fill="none" /></svg>
        <svg width="18" height="16" viewBox="0 0 18 16"><path d="M1 8h13M8 1.500L14.300 8 8 14.500" stroke="#ccc" strokeWidth="2" fill="none" /></svg>
        <svg width="16" height="16" viewBox="0 0 16 16"><path d="M13.500 10.500A6 6 0 1112.500 4" stroke="#555" strokeWidth="2" fill="none" /><path d="M15 .8V7H8.800z" fill="#555" /></svg>
      </NavIcons>
      <Omnibox>
        <svg width="14" height="14" viewBox="0 0 14 14"><circle cx="7" cy="7" r="6.200" fill="none" stroke="#555" strokeWidth="1.400" /><path d="M7 6v4.500M7 3.300v1.700" stroke="#555" strokeWidth="1.600" /></svg>
        <Url><b>localhost</b>:8080/sigmah-2.2-SNAPSHOT/#search-results&amp;id=myanmar</Url>
        <svg width="16" height="16" viewBox="0 0 16 16"><path d="M8 1.800l1.800 4.300 4.700.4-3.500 3 1 4.600L8 11.700l-4 2.400 1-4.600-3.500-3 4.700-.4z" fill="none" stroke="#555" strokeWidth="1.300" /></svg>
      </Omnibox>
      <Extensions>
        <ExtBlock /><ExtMonkey /><ExtHero /><ExtFlame /><ExtLast /><ExtWarn />
      </Extensions>
    </Toolbar>
    <Bookmarks>
      {bookmarks.map((b) => (
        <Bookmark key={b.label} $width={b.width}>
          {b.icon}
          <Faded $width={b.text} $fade={b.fade} $ls={b.ls}>{b.label}</Faded>
        </Bookmark>
      ))}
      <svg width="60" height="10" viewBox="0 0 60 10"><path d="M47.500 2l3 3-3 3M51.500 2l3 3-3 3" stroke="#444" strokeWidth="1.400" fill="none" /></svg>
    </Bookmarks>
  </>
);

const Header = () => (
  <>
    <HeaderBanner />
    <UserBand>
      <svg width="10" height="10" viewBox="0 0 10 10"><path d="M5 0l2 2-2 2-2-2zM2 3l2 2-2 2-2-2zM8 3l2 2-2 2-2-2zM5 5l2.500 2.500L5 10 2.500 7.500z" fill="#fff" /></svg>
      <UserMail>admin@sigmah.org ▾</UserMail>
      <BandLinks>
        Credits | Report a bug | Help{'  '}
        <svg width="13" height="10" viewBox="0 0 13 10"><path d="M5 2.500a3.700 3.700 0 104.500 0M7.300 0v5" stroke="#f39a35" strokeWidth="1.400" fill="none" /></svg>
        <em>Close session</em>
      </BandLinks>
    </UserBand>
    <BrandRow>
      <OrgName>CROIX-ROUGE FRANÇAISE</OrgName>
      <SearchForm>
        <Field>myanmar</Field>
        <Select>
          All
          <svg width="7" height="7" viewBox="0 0 7 7"><path d="M0 0h7L3.500 6.500z" fill="#000" /></svg>
        </Select>
        <Options>
          {['All', 'Projects', 'OrgUnits', 'Contacts', 'Files'].map((o) => (
            <Option key={o} $on={o === 'OrgUnits'}>{o}</Option>
          ))}
        </Options>
        <PushButton $width={32}>Go</PushButton>
        <PushButton $width={38}>DIH</PushButton>
      </SearchForm>
      <BrandLogo>
        <Wifi />
        <LogoMark />
      </BrandLogo>
    </BrandRow>
    <TabBar>
      <HomeTab $width={106}>
        <svg width="17" height="17" viewBox="0 0 17 17"><path d="M8.500 0L17 8l-1.500 1.500-7-6.500-7 6.500L0 8z" fill="#d2d2d2" /><path d="M2.500 9.500l6-5.500 6 5.500V17h-4v-5h-4v5h-4z" fill="#d2d2d2" /></svg>
        <HomeRule />
        <span>Dashboard</span>
      </HomeTab>
      {openTabs.map((t) => (
        <AppTab key={t.label} $width={t.width} $active={t.active}>
          {t.label}
          <TabClose />
        </AppTab>
      ))}
      <Pager>
        <PagerButton><svg width="6" height="10" viewBox="0 0 6 10"><path d="M6 0v10L0 5z" fill="#9b999a" /></svg></PagerButton>
        <PagerButton><svg width="6" height="12" viewBox="0 0 6 12"><path d="M0 0v12l6-6z" fill="#fff" /></svg></PagerButton>
      </Pager>
    </TabBar>
  </>
);

export default function App() {
  return (
    <Screen>
      <Global />
      <DesktopPanel />
      <Workspace>
        <Launcher>
          {launcherItems.map((item, i) => (
            <Slot key={i}>
              <Marker $on={item.on} />
              <Tile $bg={item.bg}>
                <svg width="56" height="56" viewBox="0 0 56 56">{item.art}</svg>
              </Tile>
              <Marker $on={item.focus} $right />
            </Slot>
          ))}
          <Pile><LauncherPile /></Pile>
        </Launcher>
        <Browser>
          <Chrome />
          <WebApp>
            <Header />
            <Results>
              <ResultsTitle>Search results for "myanmar"</ResultsTitle>
              <SortRow><span>Sort</span></SortRow>
              <ListArea>
                <List>
                  {results.map((r) => (
                    <Item key={r.title}>
                      <ItemLink>{r.title}</ItemLink>
                      {r.lines.map((l) => <Detail key={l}>{l}</Detail>)}
                    </Item>
                  ))}
                </List>
                <Scrollbar>
                  <svg width="8" height="5" viewBox="0 0 8 5"><path d="M4 0l4 4H0z" fill="#a3a3a3" /></svg>
                  <Thumb />
                </Scrollbar>
              </ListArea>
            </Results>
          </WebApp>
        </Browser>
      </Workspace>
    </Screen>
  );
}
